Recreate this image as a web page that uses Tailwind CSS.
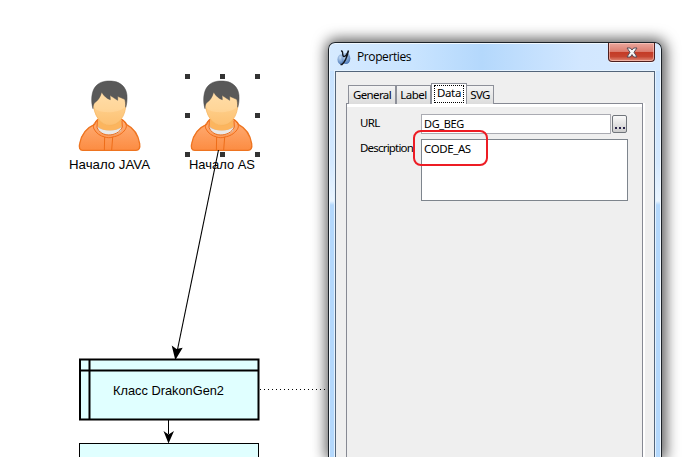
<!DOCTYPE html>
<html lang="ru">
<head>
<meta charset="utf-8">
<title>Properties</title>
<script src="https://cdn.jsdelivr.net/npm/@tailwindcss/browser@4"></script>
</head>
<body class="relative h-[457px] w-[686px] overflow-hidden bg-white text-black">
<!-- Diagram canvas -->
<svg class="absolute inset-0" width="686" height="457" viewBox="0 0 686 457" font-family="Liberation Sans, Arial, sans-serif" font-size="13">
  <defs>
    <linearGradient id="skin" x1="0" y1="0" x2="0" y2="1"><stop offset="0" stop-color="#ffe0b0"/><stop offset=".6" stop-color="#ffd699"/><stop offset="1" stop-color="#fdc278"/></linearGradient>
    <linearGradient id="coat" x1="0" y1="0" x2="0" y2="1"><stop offset="0" stop-color="#ffb07a"/><stop offset="1" stop-color="#fc8c42"/></linearGradient>
    <g id="person" transform="translate(60 65) scale(.33333)">
      <path d="M104 178C108 165 116 160 126 160H174C186 160 194 168 200 179C222 190 234 207 239 236C241 249 237 256 228 256H68C59 256 56 248 59 236C64 209 76 190 104 178Z" fill="url(#coat)" stroke="#ee7420" stroke-width="4"/>
      <path d="M112 184C122 199 176 199 186 184L183 197C166 214 132 214 115 197Z" fill="#e9e9e9" stroke="#c4bbb2" stroke-width="1.500"/>
      <path d="M116 158L113 184C128 201 170 201 185 184L182 158Z" fill="#fcb55e"/>
      <path d="M99 110C98 75 118 57 149 57C182 57 199 80 198 112C198 155 176 181 149 181C122 181 101 152 99 110Z" fill="url(#skin)" stroke="#f5b25c" stroke-width="2"/>
      <path d="M100 128C122 148 174 146 197 125C194 157 174 180 149 180C124 180 105 158 100 128Z" fill="#fcbc68" opacity=".35"/>
      <path d="M99 131C92 109 94 79 107 64C119 49 141 46 161 49C184 52 199 69 201 91C202 107 200 119 197 127C197 115 196 107 194 103L173 94L173 106L150 91L151 104C141 101 132 94 125 81C121 97 113 108 104 113C100 117 99 124 99 131Z" fill="#595959" stroke="#4c4c4c" stroke-width="1.500"/>
      <path d="M112 166C101 173 98 183 102 192C109 206 122 213 134 216L133 256M186 165C199 172 202 184 196 193C187 207 172 214 158 216L155 256M134 216C142 219 151 219 158 216M112 167L111 187C117 203 132 210 146 210C163 210 180 202 187 186L186 167" fill="none" stroke="#ee6c18" stroke-width="3"/>
    </g>
  </defs>
  <use href="#person"/>
  <use href="#person" x="112"/>
  <text x="69" y="169" textLength="81" lengthAdjust="spacingAndGlyphs">Начало JAVA</text>
  <text x="189" y="169" textLength="66" lengthAdjust="spacingAndGlyphs">Начало AS</text>
  <path fill="#333" d="M185 74h5v5h-5zM220 74h5v5h-5zM255 74h5v5h-5zM185 113h5v5h-5zM255 113h5v5h-5zM185 152h5v5h-5zM220 152h5v5h-5zM255 152h5v5h-5z"/>
  <path d="M218.500 150L177 352" stroke="#000" stroke-width="1.100"/>
  <path d="M175.300 360L171.700 345.500L176.500 349L182.700 347.700Z"/>
  <rect x="80" y="359.500" width="178.500" height="60" fill="#e0ffff" stroke="#000" stroke-width="2"/>
  <path d="M80 370.500H258M89.500 360V419" stroke="#000" stroke-width="2"/>
  <text x="113" y="395" textLength="111" lengthAdjust="spacingAndGlyphs">Класс DrakonGen2</text>
  <path d="M168.500 420V434" stroke="#000"/>
  <path d="M168.500 443.500L163.500 431L168.500 434.500L174 431Z"/>
  <rect x="79.500" y="443.500" width="179" height="30" fill="#e0ffff" stroke="#000"/>
  <path d="M260 389.500H329" stroke="#000" stroke-dasharray="1 3"/>
</svg>

<!-- Properties dialog -->
<section class="absolute top-[42px] left-[328px] flex h-[415px] w-[334px] flex-col rounded-t-[7px] border border-b-0 border-[#1c2228] bg-[linear-gradient(180deg,#c5e1ff_0,#d4e9ff_120px,#eaf5ff_158px,#b4d8fc_162px)] px-[6px] shadow-[1px_0_14px_3px_rgba(0,0,0,0.65),inset_1px_1px_0_#f0f8ff,inset_-1px_0_0_#f0f8ff]">
  <header class="-mx-[5px] mt-px flex h-[27px] shrink-0 items-start rounded-t-[5px] bg-[linear-gradient(90deg,#d6eaff_0,#c9e4ff_25%,#b4d8fc_46%,#d2e7ff_76%,#d6eaff_100%)] pl-[7px]">
    <svg class="mt-[4px]" width="16" height="18" viewBox="0 0 16 18">
      <defs><radialGradient id="orb" cx=".4" cy=".3" r=".7"><stop offset="0" stop-color="#c9def5"/><stop offset="1" stop-color="#4b79b9"/></radialGradient></defs>
      <ellipse cx="4" cy="11.500" rx="3.500" ry="5" fill="url(#orb)"/><ellipse cx="9" cy="10.500" rx="4.300" ry="5.500" fill="url(#orb)"/>
      <path d="M4 3C7 2.500 4.500 8.500 7 8.500C9 8.500 10.500 5 11.500 2.500M11.500 2.500C10.500 7 8.500 13.500 5 16.500H3.500" fill="none" stroke="#10151d" stroke-width="1.400"/>
    </svg>
    <h1 class="mt-[4px] ml-[4px] font-['Open_Sans',sans-serif] text-[12px] leading-[17px] tracking-[-0.4px]">Properties</h1>
    <button class="mr-[5px] -mt-px ml-auto flex h-[19px] w-[47px] items-center justify-center rounded-b-[4px] border border-t-0 border-[#4d1e1e] bg-[linear-gradient(180deg,#eaa79d_0,#dc7e70_47%,#c43b26_52%,#c54430_75%,#e28b78_100%)] shadow-[inset_0_0_0_1px_rgba(255,215,205,0.55),0_1px_0_#f3f9ff]" aria-label="Close">
      <svg class="ml-px" width="12" height="11" viewBox="0 0 12 11"><path d="M1 1H4.300L6 3L7.700 1H11L8 5.300L11 10H7.700L6 7.600L4.300 10H1L4 5.300Z" fill="#f6f6f6" stroke="#574c58"/></svg>
    </button>
  </header>
  <div class="flex grow flex-col border border-b-0 border-[#53657a] bg-[#efefef] pr-[11px] pl-[10px] pt-[11px] font-['Noto_Sans',sans-serif] shadow-[0_0_0_1px_#e4f2ff]">
    <nav class="relative z-10 flex h-[21px] items-end pl-[2px] text-[11.5px] leading-[16px]">
      <span class="flex h-[19px] w-[48px] items-center justify-center border border-b-0 border-[#8d9099] bg-linear-to-b from-[#f4f4f4] to-[#dcdcdc] pb-px tracking-[-0.6px]">General</span>
      <span class="flex h-[19px] w-[35px] items-center justify-center border border-b-0 border-[#8d9099] bg-linear-to-b from-[#f4f4f4] to-[#dcdcdc] pb-px tracking-[-0.5px]">Label</span>
      <span class="flex h-[21px] w-[36px] justify-center border border-b-0 border-[#8d9099] bg-white px-[2px] pt-px"><span class="flex h-[18px] w-full items-center justify-center border border-dotted border-black pb-[2px] tracking-[-0.3px]">Data</span></span>
      <span class="flex h-[19px] w-[27px] items-center justify-center border border-b-0 border-l-0 border-[#8d9099] bg-linear-to-b from-[#f4f4f4] to-[#dcdcdc] pb-px tracking-[-0.7px]">SVG</span>
    </nav>
    <div class="-mt-px flex grow flex-col border border-b-0 border-[#868993] pt-[10px] pr-[13px] pl-[13px] shadow-[inset_0_3px_0_#fff,2px_0_0_#fff]">
      <div class="flex h-[20px] items-start">
        <label class="w-[61px] pt-px text-[11.5px] leading-[16px] tracking-[-0.6px]">URL</label>
        <div class="h-[20px] w-[190px] border border-[#aaabb2] bg-white pl-[2px] text-[11px] leading-[18px] tracking-[-0.4px]">DG_BEG</div>
        <button class="mt-px ml-px flex h-[18px] w-[15px] items-end justify-center gap-[2px] rounded-[2px] border border-[#70757b] bg-linear-to-b from-[#fafafa] to-[#cdcdcd] pb-[3px]" aria-label="Browse"><i class="size-[2px] bg-[#29244a]"></i><i class="size-[2px] bg-[#29244a]"></i><i class="size-[2px] bg-[#29244a]"></i></button>
      </div>
      <div class="mt-[5px] flex h-[62px] items-start">
        <label class="w-[61px] pt-px text-[11.5px] leading-[16px] tracking-[-0.8px] whitespace-nowrap">Description</label>
        <div class="h-[62px] w-[207px] border border-[#7e858d] bg-white pl-[2px] text-[11.5px] leading-[18px] tracking-[-0.4px]">CODE_AS</div>
      </div>
    </div>
  </div>
</section>
<!-- Highlight around the description value -->
<div class="absolute top-[130px] left-[413px] h-[36px] w-[75px] rounded-[8px] border-2 border-[#ed1c24]"></div>
</body>
</html>
